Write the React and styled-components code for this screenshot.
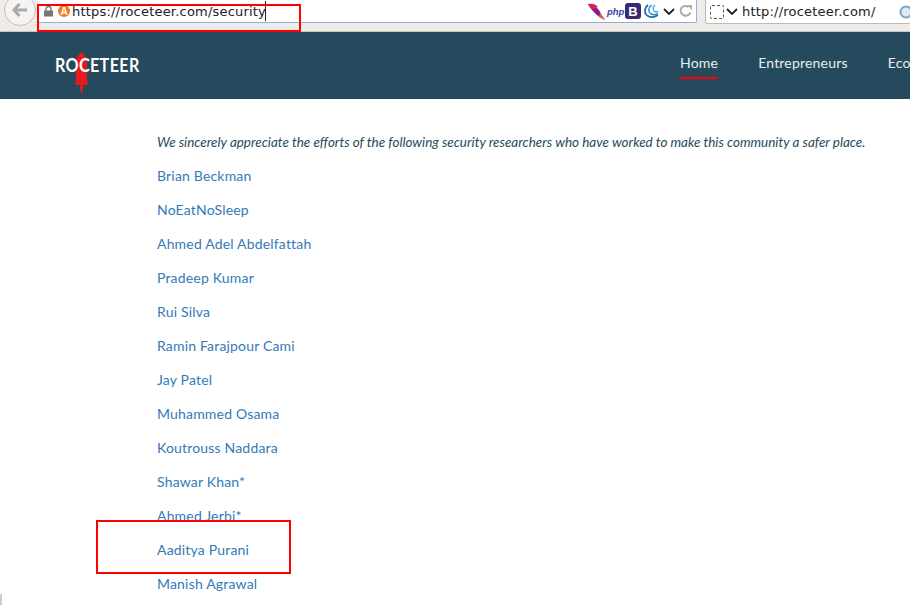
import React from 'react';
import styled, { createGlobalStyle } from 'styled-components';

const Global = createGlobalStyle`
html, body { margin:0; padding:0; background:#fff; overflow:hidden; }
body { width:910px; height:605px; font-family:"Lato", "Liberation Sans", sans-serif; }
`
const Page = styled.div`
position:relative;
width:910px;
height:605px;
overflow:hidden;
background:#fff;
`
const Chrome = styled.div`
display:flex;
align-items:flex-start;
height:31px;
background:#eeebe8;
border-bottom:1px solid #c9c7c4;
`
const BackButton = styled.div`
display:flex;
align-items:center;
justify-content:center;
flex:none;
width:30px;
height:30px;
margin:-6px 0 0 4px;
border-radius:50%;
border:1px solid #c4c2bf;
background:#f5f4f2;
`
const UrlBar = styled.div`
display:flex;
align-items:center;
flex:none;
width:659px;
height:23px;
margin-left:2px;
padding:0 3px 0 4px;
box-sizing:border-box;
background:#fff;
border-bottom:1px solid #8fb2dc;
border-right:1px solid #8fb2dc;
border-bottom-right-radius:2px;
`
const UrlText = styled.span`
font-family:"DejaVu Sans", sans-serif;
font-size:13px;
color:#222;
white-space:nowrap;
letter-spacing:0.2px;
`
const Lock = styled.span`
display:flex;
flex:none;
margin-left:1px;
`
const Badge = styled.span`
display:flex;
align-items:center;
justify-content:center;
flex:none;
width:12px;
height:12px;
margin:0 2px 0 4px;
border-radius:50%;
background:#ee7d22;
color:#fff;
font:bold 10px "Liberation Sans", sans-serif;
`
const Tools = styled.div`
display:flex;
align-items:center;
gap:2px;
margin-left:auto;
`
const PhpMark = styled.span`
flex:none;
width:16px;
font:italic bold 9.5px "Liberation Sans", sans-serif;
color:#3b3f9e;
`
const BootMark = styled.span`
display:flex;
align-items:center;
justify-content:center;
flex:none;
width:16px;
height:16px;
border-radius:3px;
background:#3b2a70;
color:#fff;
font:bold 13px "Liberation Sans", sans-serif;
`
const ToolChevron = styled.span`
display:flex;
margin-left:2px;
`
const Reload = styled.svg`
margin-left:2px;
`
const SearchBar = styled.div`
display:flex;
align-items:center;
flex:1;
height:23px;
margin-left:8px;
padding-left:4px;
background:#fff;
border-left:1px solid #bdbbb8;
border-bottom:1px solid #bdbbb8;
border-bottom-left-radius:3px;
overflow:hidden;
`
const DashedBox = styled.span`
flex:none;
width:12px;
height:12px;
border:1px dashed #555;
border-radius:2px;
`
const SearchChevron = styled.span`
display:flex;
margin-left:2px;
`
const SearchText = styled(UrlText)`
margin-left:4px;
`
const SearchIcon = styled.span`
display:flex;
flex:none;
margin-left:23px;
`
const Header = styled.header`
display:flex;
align-items:flex-start;
justify-content:space-between;
height:67px;
background:#264a5d;
overflow:hidden;
`
const Logo = styled.div`
position:relative;
margin:21px 0 0 55px;
height:24px;
width:85px;
`
const LogoRocket = styled.svg`
position:absolute;
left:20px;
top:-1px;
`
const LogoText = styled.span`
display:inline-block;
position:relative;
font:bold 19px "Lato", sans-serif;
line-height:24px;
letter-spacing:0.4px;
color:#fff;
transform:scaleX(0.85);
transform-origin:left center;
`
const Nav = styled.nav`
display:flex;
gap:40px;
flex:none;
width:230px;
padding-top:21px;
`
const NavItem = styled.a`
flex:none;
height:26px;
font-size:14px;
line-height:20px;
letter-spacing:0.2px;
color:#e8eef2;
box-sizing:border-box;
border-bottom:${p => (p.$active ? '2px solid #f00' : 'none')};
`
const Main = styled.main`
padding:33px 0 0 157px;
`
const Intro = styled.p`
margin:0;
font-size:13.46px;
line-height:20px;
font-style:italic;
color:#264a5d;
white-space:nowrap;
`
const People = styled.ul`
list-style:none;
margin:14px 0 0;
padding:0;
display:flex;
flex-direction:column;
gap:14px;
`
const Person = styled.li`
font-size:14px;
line-height:20px;
letter-spacing:0.18px;
color:#337ab7;
white-space:nowrap;
`
const Mark = styled.div`
position:absolute;
box-sizing:border-box;
border:2px solid #f00;
left:${p => p.$x}px;
top:${p => p.$y}px;
width:${p => p.$w}px;
height:${p => p.$h}px;
`
const Scroll = styled.div`
position:absolute;
left:0;
bottom:0;
width:2px;
height:11px;
background:#ccc;
`
const Cursor = styled.div`
position:absolute;
left:265px;
top:1px;
width:1px;
height:20px;
background:#222;
`

const people = [
  'Brian Beckman',
  'NoEatNoSleep',
  'Ahmed Adel Abdelfattah',
  'Pradeep Kumar',
  'Rui Silva',
  'Ramin Farajpour Cami',
  'Jay Patel',
  'Muhammed Osama',
  'Koutrouss Naddara',
  'Shawar Khan*',
  'Ahmed Jerbi*',
  'Aaditya Purani',
  'Manish Agrawal',
];

const Chevron = () => (
  <svg width="12" height="7" viewBox="0 0 12 7">
    <path d="M1 1l5 5 5-5" fill="none" stroke="#222" strokeWidth="1.8" />
  </svg>
);

export default function App() {
  return (
    <Page>
      <Global />
      <Chrome>
        <BackButton>
          <svg width="16" height="14" viewBox="0 0 16 14">
            <path d="M7.5 1L2 7l5.5 6M2.5 7H15" fill="none" stroke="#a9a9a9" strokeWidth="3" />
          </svg>
        </BackButton>
        <UrlBar>
          <Lock>
            <svg width="11" height="12" viewBox="0 0 11 12">
              <path d="M3 6V4a2.5 2.5 0 015 0v2" fill="none" stroke="#777" strokeWidth="1.4" />
              <rect x="1" y="5.5" width="9" height="6" fill="#777" />
            </svg>
          </Lock>
          <Badge>A</Badge>
          <UrlText>https://roceteer.com/security</UrlText>
          <Tools>
            <svg width="17" height="17" viewBox="0 0 17 17">
              <path d="M0 1c5 0 11 4 13 10l4 6C12 15 4 9 0 1z" fill="#8d1a8c" />
              <path d="M0 1c4-1 8 0 10 3L5 6C3 5 1 3 0 1z" fill="#e1204f" />
              <path d="M12 10l5 7-6-3z" fill="#d9663a" />
            </svg>
            <PhpMark>php</PhpMark>
            <BootMark>B</BootMark>
            <svg width="16" height="16" viewBox="0 0 16 16">
              <path d="M5 2C1 5 1 11 5 13c3 2 7 1 10-1" fill="none" stroke="#1b6fb5" strokeWidth="1.7" />
              <path d="M8.5 2C5 5 5 9 8 11c2 1 5 .7 7-.6" fill="none" stroke="#2a86c9" strokeWidth="1.5" />
              <path d="M12 2C9.5 4 9.5 7 11.5 8.3c1 .6 2.5.5 3.5 0" fill="none" stroke="#4aa3df" strokeWidth="1.4" />
            </svg>
            <ToolChevron><Chevron /></ToolChevron>
            <Reload width="14" height="14" viewBox="0 0 14 14">
              <path d="M11.5 8.5A5 5 0 112 4.5a5 5 0 017.5-1.5" fill="none" stroke="#a8afb5" strokeWidth="2" />
              <path d="M8 1h5v5z" fill="#a8afb5" />
            </Reload>
          </Tools>
        </UrlBar>
        <SearchBar>
          <DashedBox />
          <SearchChevron><Chevron /></SearchChevron>
          <SearchText>http://roceteer.com/</SearchText>
          <SearchIcon>
            <svg width="14" height="14" viewBox="0 0 14 14">
              <circle cx="7" cy="7" r="5.5" fill="#dcebf7" stroke="#7ea6c9" strokeWidth="2" />
            </svg>
          </SearchIcon>
        </SearchBar>
      </Chrome>
      <Header>
        <Logo>
          <LogoRocket width="13" height="42" viewBox="0 0 13 42">
            <path d="M6.5 0C9.5 2 12 6 12 12v15l1 5-2 1H8l-.7 8H5.700L5 33H2l-2-1 1-5V12C1 6 3.500 2 6.500 0z" fill="#e8191c" />
          </LogoRocket>
          <LogoText>ROCETEER</LogoText>
        </Logo>
        <Nav>
          <NavItem $active>Home</NavItem>
          <NavItem>Entrepreneurs</NavItem>
          <NavItem>Eco</NavItem>
        </Nav>
      </Header>
      <Main>
        <Intro>We sincerely appreciate the efforts of the following security researchers who have worked to make this community a safer place.</Intro>
        <People>
          {people.map(name => <Person key={name}>{name}</Person>)}
        </People>
      </Main>
      <Cursor />
      <Mark $x={37} $y={4} $w={264} $h={28} />
      <Mark $x={96} $y={520} $w={195} $h={54} />
      <Scroll />
    </Page>
  );
}
